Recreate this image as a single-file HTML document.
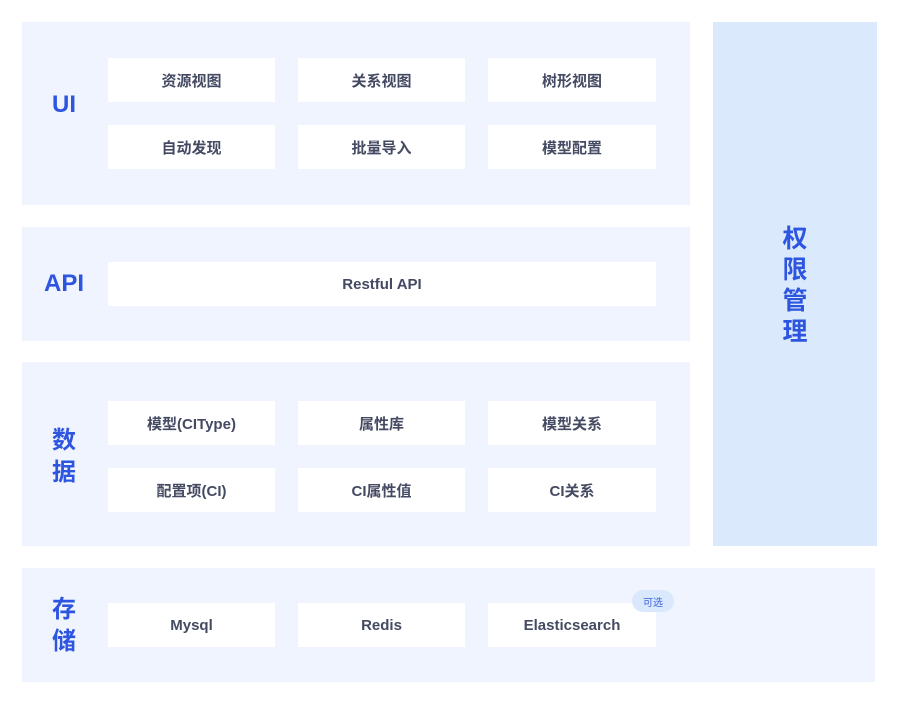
<!DOCTYPE html><html><head><meta charset="utf-8"><style>
body{margin:0;width:900px;height:704px;background:#fff;position:relative;font-family:"Liberation Sans","Noto Sans CJK SC",sans-serif;overflow:hidden}
.p{position:absolute;background:#eff4fe}
.b{position:absolute;background:#fff;width:167px;height:44px;display:flex;align-items:center;justify-content:center;font-size:15px;font-weight:bold;color:#454a63}
.l{position:absolute;left:22px;width:84px;display:flex;align-items:center;justify-content:center;text-align:center;color:#2d55e0;font-weight:bold;font-size:24px;line-height:32px}
</style></head><body>
<div class="p" style="left:22px;top:22px;width:668px;height:183px"></div>
<div class="p" style="left:22px;top:227px;width:668px;height:114px"></div>
<div class="p" style="left:22px;top:362px;width:668px;height:184px"></div>
<div class="p" style="left:22px;top:568px;width:853px;height:114px"></div>
<div style="position:absolute;left:713px;top:22px;width:164px;height:524px;background:#dbe9fd;color:#2d55e0;font-weight:bold;font-size:25px;line-height:31px;text-align:center;font-family:'Noto Sans CJK SC',sans-serif"><div style="position:absolute;left:0;right:0;top:200px">权<br>限<br>管<br>理</div></div>
<div class="l" style="top:22px;height:166px">UI</div>
<div class="l" style="top:227px;height:114px">API</div>
<div class="l" style="top:362px;height:184px;font-family:'Noto Sans CJK SC',sans-serif">数<br>据</div>
<div class="l" style="top:568px;height:110px;font-family:'Noto Sans CJK SC',sans-serif">存<br>储</div>
<div class="b" style="left:108px;top:58px">资源视图</div>
<div class="b" style="left:298px;top:58px">关系视图</div>
<div class="b" style="left:488px;top:58px;width:168px">树形视图</div>
<div class="b" style="left:108px;top:125px">自动发现</div>
<div class="b" style="left:298px;top:125px">批量导入</div>
<div class="b" style="left:488px;top:125px;width:168px">模型配置</div>
<div class="b" style="left:108px;top:262px;width:548px">Restful API</div>
<div class="b" style="left:108px;top:401px">模型(CIType)</div>
<div class="b" style="left:298px;top:401px">属性库</div>
<div class="b" style="left:488px;top:401px;width:168px">模型关系</div>
<div class="b" style="left:108px;top:468px">配置项(CI)</div>
<div class="b" style="left:298px;top:468px">CI属性值</div>
<div class="b" style="left:488px;top:468px;width:168px">CI关系</div>
<div class="b" style="left:108px;top:603px">Mysql</div>
<div class="b" style="left:298px;top:603px">Redis</div>
<div class="b" style="left:488px;top:603px;width:168px">Elasticsearch</div>
<div style="position:absolute;left:632px;top:590px;width:42px;height:22px;border-radius:11px;background:#d9e8fc;color:#3d62d8;font-size:10px;display:flex;align-items:center;justify-content:center">可选</div>
</body></html>
